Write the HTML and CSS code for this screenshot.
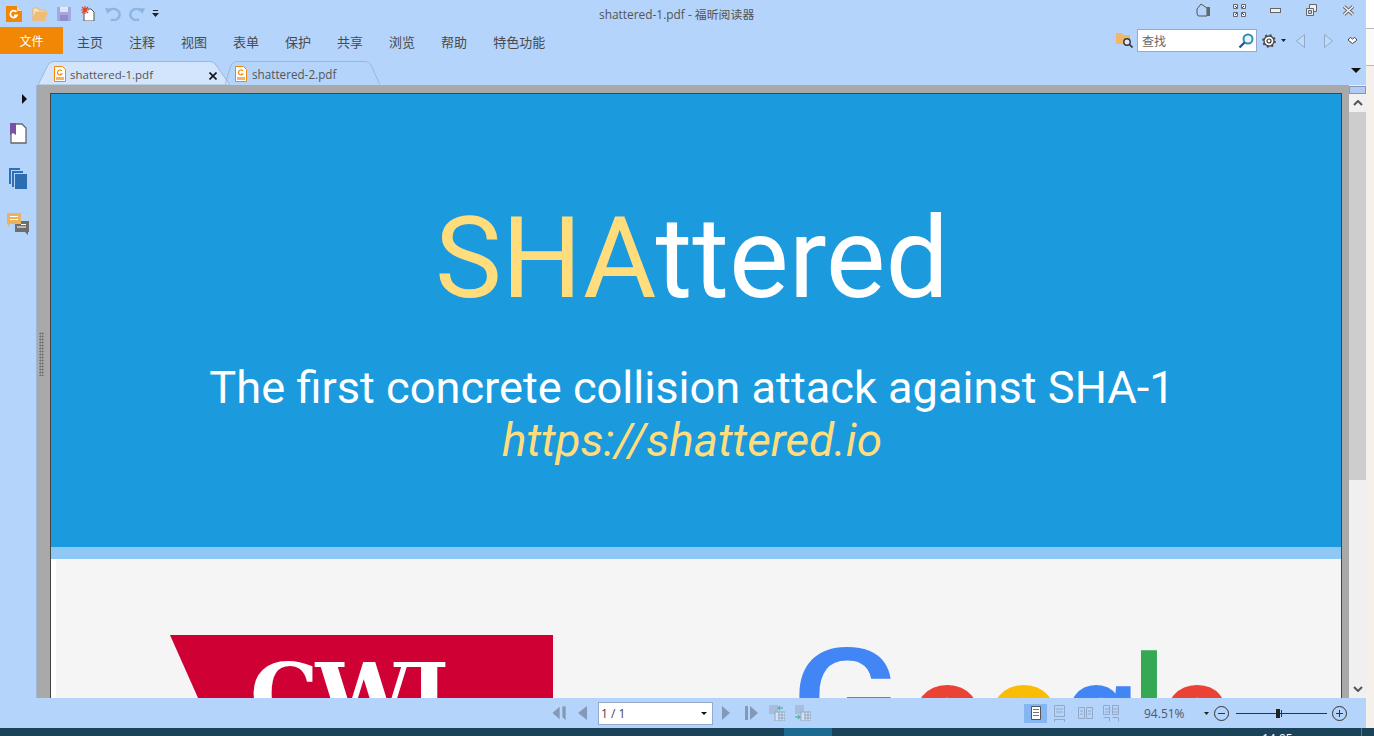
FILE: index.html
```html
<!DOCTYPE html>
<html>
  <head>
    <title>shattered-1.pdf - 福昕阅读器</title>
    <meta name="viewport" content="width=device-width, initial-scale=1.0">
    <link rel="stylesheet" href="styles.css">
  </head>
  <body>
    <div class="screen">
      <div class="desk">
        <div class="app">

          <!-- title bar -->
          <div class="titlebar">
            <div class="quick">
              <svg class="q-logo" width="16" height="16" viewBox="0 0 16 16"><path d="M0 0h11l5 5v11H0z" fill="#f28705"/><path d="M11 0l5 5h-5z" fill="#fbd9ae"/><path d="M10.500 5.800A3.500 3.500 0 1 0 11 9.500H8" fill="none" stroke="#fff" stroke-width="1.800"/></svg>
              <svg class="q-open" width="16" height="14" viewBox="0 0 16 14"><path d="M1 1h5l1 2h6v2H4L1 12z" fill="#fbe3b8" stroke="#eab56a" stroke-width="1"/><path d="M4 5h12l-3 9H0z" fill="#efbd76"/></svg>
              <svg class="q-save" width="14" height="14" viewBox="0 0 14 14"><path d="M0 0h14v14H0z" fill="#a5a8dc"/><path d="M3 0h8v5H3z" fill="#e2e4f6"/><path d="M3 8h8v6H3z" fill="#8d90cc"/></svg>
              <svg class="q-new" width="15" height="15" viewBox="0 0 15 15"><path d="M4 3h7l3 3v9H4z" fill="#fff" stroke="#555"/><path d="M5 0v8M1 4h8M2 1l6 6M8 1L2 7" stroke="#e2452c" stroke-width="1.200"/></svg>
              <svg class="q-undo" width="16" height="15" viewBox="0 0 16 15"><path d="M4 5a6 5.500 0 1 1 2 8.500" fill="none" stroke="#8db4e2" stroke-width="2.500"/><path d="M0 2l7 .5L2.500 8z" fill="#8db4e2"/></svg>
              <svg class="q-redo" width="16" height="15" viewBox="0 0 16 15"><path d="M12 5a6 5.500 0 1 0-2 8.500" fill="none" stroke="#8db4e2" stroke-width="2.500"/><path d="M16 2l-7 .5L13.500 8z" fill="#8db4e2"/></svg>
              <svg class="q-more" width="7" height="7" viewBox="0 0 7 7"><path d="M1 0h5v1H1zM0 3h7L3.500 7z" fill="#222"/></svg>
            </div>
            <div class="win-title">shattered-1.pdf - 福昕阅读器</div>
            <div class="win-btns">
              <svg class="w-skin" width="15" height="14" viewBox="0 0 15 14"><path d="M1 6l4-5 6 4v8H3Q1 13 1 10z" fill="none" stroke="#555"/><path d="M11 4h3v9h-3z" fill="#666"/></svg>
              <svg class="w-full" width="13" height="13" viewBox="0 0 13 13"><path d="M.5.500h4v4h-4zM8.500.500h4v4h-4zM.5 8.500h4v4h-4zM8.500 8.500h4v4h-4z" fill="#eef3fb" stroke="#666"/><path d="M2 2l2 2M11 2L9 4M2 11l2-2M11 11L9 9" stroke="#444"/></svg>
              <svg class="w-min" width="11" height="5" viewBox="0 0 11 5"><rect x=".5" y=".5" width="10" height="4" fill="#e8f0fb" stroke="#666"/></svg>
              <svg class="w-max" width="11" height="12" viewBox="0 0 11 12"><path d="M3.500.5h7v7h-7z" fill="#e8f0fb" stroke="#666"/><path d="M.5 4.500h7v7h-7z" fill="#e8f0fb" stroke="#666"/><path d="M2.500 6.500h3v3h-3z" fill="#b4d4fb" stroke="#666"/></svg>
              <svg class="w-close" width="13" height="11" viewBox="0 0 13 11"><path d="M2 1.500l9 8M11 1.500l-9 8" stroke="#666" stroke-width="3.600"/><path d="M2 1.500l9 8M11 1.500l-9 8" stroke="#eef3fb" stroke-width="1.600"/></svg>
            </div>
          </div>

          <!-- ribbon tabs -->
          <div class="ribbon">
            <div class="file-btn">文件</div>
            <nav class="menu">
              <span>主页</span><span>注释</span><span>视图</span><span>表单</span><span>保护</span><span>共享</span><span>浏览</span><span>帮助</span><span>特色功能</span>
            </nav>
            <div class="search-tools">
              <svg class="s-folder" width="17" height="15" viewBox="0 0 17 15"><path d="M0 0h6l1 2h7v9H0z" fill="#efb766"/><circle cx="11" cy="9" r="3.200" fill="#dce9fb" stroke="#333" stroke-width="1.400"/><path d="M13.500 11.500L16.500 14.500" stroke="#333" stroke-width="1.600"/></svg>
              <div class="search-box">
                <span>查找</span>
                <svg width="16" height="16" viewBox="0 0 16 16"><circle cx="10" cy="6" r="4.500" fill="#e9f4fb" stroke="#2f8fc0" stroke-width="2"/><path d="M6.500 9.500L1.500 14.500" stroke="#1f5f96" stroke-width="2.400"/></svg>
              </div>
              <svg class="s-gear" width="14" height="14" viewBox="0 0 14 14"><circle cx="7" cy="7" r="5" fill="#fff" stroke="#444" stroke-width="1.300"/><circle cx="7" cy="7" r="6" fill="none" stroke="#444" stroke-width="1.600" stroke-dasharray="2 2.710"/><circle cx="7" cy="7" r="2" fill="#fff" stroke="#333" stroke-width="1.200"/></svg>
              <svg class="s-drop" width="5" height="3" viewBox="0 0 5 3"><path d="M0 0h5L2.500 3z" fill="#222"/></svg>
              <svg class="s-prev" width="9" height="14" viewBox="0 0 9 14"><path d="M8.500.5v13L.5 7z" fill="#c3daf7" stroke="#8fa9cc"/></svg>
              <svg class="s-next" width="9" height="14" viewBox="0 0 9 14"><path d="M.5.5v13L8.500 7z" fill="#c3daf7" stroke="#8fa9cc"/></svg>
              <svg class="s-fold" width="9" height="7" viewBox="0 0 9 7"><path d="M.5 2L2.500.5 4.500 2 6.500.5 8.500 2v1.500L4.500 6.500.5 3.500z" fill="#fff" stroke="#444"/></svg>
            </div>
          </div>

          <!-- document tabs -->
          <div class="doc-tabs">
            <div class="doc-tab active">
              <svg class="tab-bg" viewBox="0 0 192 24" preserveAspectRatio="none"><path d="M0 24L10 4Q12 .5 16 .5H172Q176 .5 178 4L192 24z" fill="#d3e5fd" stroke="#9db7d9"/></svg>
              <svg class="pdf-ico" width="12" height="16" viewBox="0 0 12 16"><path d="M.5.5h8l3 3v12H.5z" fill="#fff" stroke="#f28705"/><path d="M8 5A2.500 2.500 0 1 0 8 8H6" fill="none" stroke="#f28705" stroke-width="1.200"/><path d="M2 11h8v3H2z" fill="#f5b26b"/></svg>
              <span class="tab-name">shattered-1.pdf</span>
              <svg class="tab-close" width="8" height="8" viewBox="0 0 8 8"><path d="M.5.5l7 7M7.500.5l-7 7" stroke="#111" stroke-width="1.600"/></svg>
            </div>
            <div class="doc-tab second">
              <svg class="tab-bg" viewBox="0 0 155 24" preserveAspectRatio="none"><path d="M0 24L6 4Q8 .5 12 .5H140Q144 .5 146 4L155 24" fill="none" stroke="#9db7d9"/></svg>
              <svg class="pdf-ico" width="12" height="16" viewBox="0 0 12 16"><path d="M.5.5h8l3 3v12H.5z" fill="#fff" stroke="#f28705"/><path d="M8 5A2.500 2.500 0 1 0 8 8H6" fill="none" stroke="#f28705" stroke-width="1.200"/><path d="M2 11h8v3H2z" fill="#f5b26b"/></svg>
              <span class="tab-name">shattered-2.pdf</span>
            </div>
            <svg class="tabs-more" width="10" height="5" viewBox="0 0 10 5"><path d="M0 0h10L5 5z" fill="#111"/></svg>
          </div>

          <!-- sidebar, page, scrollbar -->
          <div class="work">
            <aside class="sidebar">
              <svg class="side-arrow" width="5" height="10" viewBox="0 0 5 10"><path d="M0 0l5 5-5 5z" fill="#111"/></svg>
              <svg class="side-ico first" width="17" height="21" viewBox="0 0 17 21"><path d="M1 1h11l4 4v15H1z" fill="#fff" stroke="#666" stroke-width="1.300"/><path d="M0 0h6v12l-3-2-3 2z" fill="#7b52a3"/></svg>
              <svg class="side-ico" width="18" height="21" viewBox="0 0 18 21"><path d="M0 0h11v2H2v14H0zM3 3h11v2H5v14H3z" fill="#2f6fb5"/><path d="M6 6h12v15H6z" fill="#2c6cb0"/></svg>
              <svg class="side-ico" width="22" height="22" viewBox="0 0 22 22"><path d="M8 8h14v11h-1v3l-3-3H8z" fill="#6e6e6e"/><path d="M0 0h14v11H3l-2 3v-3H0z" fill="#efb25c"/><path d="M3 3.500h8M3 6.500h8M10 14h9M14 11.500h5" stroke="#fff"/></svg>
            </aside>
            <div class="grip"></div>
            <main class="viewer">
              <article class="page">
                <section class="hero">
                  <h1><span class="sha">SHA</span>ttered</h1>
                  <p class="sub">The first concrete collision attack against SHA-1</p>
                  <p class="url">https://shattered.io</p>
                </section>
                <div class="band"></div>
                <section class="logos">
                  <div class="cwi">CWI</div>
                  <div class="google"><span class="g1">G</span><span class="g2">o</span><span class="g3">o</span><span class="g4">g</span><span class="g5">l</span><span class="g6">e</span></div>
                </section>
              </article>
            </main>
            <div class="scrollbar">
              <div class="sb-cap"></div>
              <div class="sb-btn"><svg width="10" height="6" viewBox="0 0 10 6"><path d="M1 5l4-4 4 4" fill="none" stroke="#555" stroke-width="2"/></svg></div>
              <div class="sb-thumb"></div>
              <div class="sb-track"></div>
              <div class="sb-btn"><svg width="10" height="6" viewBox="0 0 10 6"><path d="M1 1l4 4 4-4" fill="none" stroke="#555" stroke-width="2"/></svg></div>
            </div>
          </div>

          <!-- status bar -->
          <footer class="status">
            <svg class="n-first" width="14" height="14" viewBox="0 0 14 14"><path d="M8 0v14L0 7zM10 0h4v14h-1l-3-3z" fill="#8499b8" stroke="#c9dcf5" stroke-width=".6"/></svg>
            <svg class="n-prev" width="9" height="14" viewBox="0 0 9 14"><path d="M9 0v14L0 7z" fill="#8499b8"/></svg>
            <div class="page-select"><span>1 / 1</span><svg width="6" height="3" viewBox="0 0 6 3"><path d="M0 0h6L3 3z" fill="#111"/></svg></div>
            <svg class="n-next" width="8" height="14" viewBox="0 0 8 14"><path d="M0 0v14l8-7z" fill="#8499b8"/></svg>
            <svg class="n-last" width="13" height="14" viewBox="0 0 13 14"><path d="M0 0h3v14H0zM5 0v14l8-7z" fill="#8499b8"/></svg>
            <svg class="n-tab" width="16" height="16" viewBox="0 0 16 16"><path d="M0 0h9v9H0z" fill="#a9bcd8"/><path d="M6 7h10v9H6z" fill="#d8e3f2" stroke="#90a5c4"/><path d="M9 10h7M9 13h7M10 7v9M13 7v9" stroke="#90a5c4"/><path d="M14 3H9M11 1L9 3l2 2" fill="none" stroke="#5fb6a8" stroke-width="1.300"/></svg>
            <svg class="n-tab2" width="16" height="16" viewBox="0 0 16 16"><path d="M0 0h9v9H0z" fill="#a9bcd8"/><path d="M6 7h10v9H6z" fill="#d8e3f2" stroke="#90a5c4"/><path d="M9 10h7M9 13h7M10 7v9M13 7v9" stroke="#90a5c4"/><path d="M0 12h5M3 10l2 2-2 2" fill="none" stroke="#5fb6a8" stroke-width="1.300"/></svg>

            <div class="view-modes">
              <div class="mode on"><svg width="10" height="14" viewBox="0 0 10 14"><path d="M.5.5h9v13h-9z" fill="#fff" stroke="#555"/><path d="M2 3.500h6M2 6.500h6M2 9.500h6" stroke="#777"/></svg></div>
              <svg class="mode-ico" width="11" height="17" viewBox="0 0 11 17"><path d="M.5.500h10v11H.5zM.5 14v3M10.500 14v3M.5 14.500h10M2 4h7M2 7h7" fill="none" stroke="#93a8c6"/></svg>
              <svg class="mode-ico" width="15" height="12" viewBox="0 0 15 12"><path d="M.5.500h6v11h-6zM8.500.500h6v11h-6zM2 4h3M2 7h3M10 4h3M10 7h3" fill="none" stroke="#93a8c6"/></svg>
              <svg class="mode-ico" width="16" height="17" viewBox="0 0 16 17"><path d="M.5.500h6v9h-6zM9.500.500h6v9h-6zM.5 12.500h6v4M9.500 12.500h6v4M2 4h4M10 4h5M2 7h4M10 7h5" fill="none" stroke="#93a8c6"/></svg>
            </div>
            <span class="zoom-val">94.51%</span>
            <svg class="zoom-drop" width="5" height="3" viewBox="0 0 5 3"><path d="M0 0h5L2.500 3z" fill="#222"/></svg>
            <svg class="zoom-btn" width="15" height="15" viewBox="0 0 15 15"><circle cx="7.500" cy="7.500" r="7" fill="none" stroke="#333"/><path d="M4 7.500h7" stroke="#333"/></svg>
            <div class="slider"><div class="knob"></div><div class="tick"></div></div>
            <svg class="zoom-btn" width="15" height="15" viewBox="0 0 15 15"><circle cx="7.500" cy="7.500" r="7" fill="none" stroke="#333"/><path d="M4 7.500h7M7.500 4v7" stroke="#333"/></svg>
          </footer>
        </div>

        <div class="strip">
          <div class="strip-a"></div>
          <div class="strip-b"></div>
          <div class="strip-c"></div>
        </div>
      </div>

      <div class="taskbar">
        <div class="task-active"></div>
        <div class="clock">14:05</div>
        <div class="task-line"></div>
      </div>
    </div>
  </body>
</html>
```

FILE: styles.css
```css
* {
  box-sizing: border-box;
}
html, body {
  margin: 0;
  height: 736px;
  overflow: hidden;
}
body {
  font-family: "Open Sans", "Noto Sans CJK SC", sans-serif;
  color: #444;
}
svg {
  display: block;
  flex: none;
}
.screen {
  height: 736px;
  display: flex;
  flex-direction: column;
}
.desk {
  height: 728px;
  display: flex;
}
.app {
  width: 1366px;
  display: flex;
  flex-direction: column;
  background-color: #b4d4fb;
}

/* title bar */
.titlebar {
  height: 27px;
  flex: none;
  display: grid;
  grid-template-columns: 599px auto 1fr;
  align-items: center;
}
.quick {
  display: flex;
  align-items: center;
  padding-left: 6px;
}
.q-open { margin-left: 10px; }
.q-save { margin-left: 9px; }
.q-new { margin-left: 9px; }
.q-undo { margin-left: 10px; }
.q-redo { margin-left: 8px; }
.q-more { margin-left: 7px; }
.win-title {
  font-size: 11.900px;
  color: #555;
  margin-top: -1px;
}
.win-btns {
  display: flex;
  align-items: center;
  justify-content: flex-end;
  padding-right: 11px;
  margin-top: -7px;
}
.w-full { margin-left: 22px; }
.w-min { margin-left: 24px; }
.w-max { margin-left: 25px; }
.w-close { margin-left: 25px; }

/* ribbon */
.ribbon {
  height: 27px;
  flex: none;
  display: flex;
  align-items: center;
}
.file-btn {
  width: 63px;
  height: 27px;
  background-color: #f28705;
  color: #fff;
  font-size: 12px;
  display: flex;
  align-items: center;
  justify-content: center;
}
.menu {
  display: flex;
  gap: 26px;
  margin-left: 14px;
  font-size: 13px;
  color: #4a4a4a;
  padding-top: 2px;
}
.search-tools {
  display: flex;
  align-items: center;
  margin-left: auto;
  padding-right: 9px;
}
.search-box {
  width: 120px;
  height: 23px;
  margin-left: 4px;
  background-color: #fff;
  border: 1px solid #94a9cb;
  display: flex;
  align-items: center;
  justify-content: space-between;
  padding: 0 2px 0 4px;
  font-size: 12px;
  color: #666;
}
.s-gear { margin-left: 5px; }
.s-drop { margin-left: 5px; }
.s-prev { margin-left: 10px; }
.s-next { margin-left: 19px; }
.s-fold { margin-left: 15px; }

/* document tabs */
.doc-tabs {
  height: 31px;
  flex: none;
  display: flex;
  align-items: flex-end;
  padding-left: 38px;
}
.doc-tab {
  position: relative;
  height: 24px;
  display: flex;
  align-items: center;
  font-size: 11.500px;
  color: #555;
  padding-top: 2px;
}
.doc-tab.active {
  width: 192px;
  padding-left: 16px;
}
.doc-tab.second {
  width: 155px;
  margin-left: -5px;
  padding-left: 10px;
}
.doc-tab.second .tab-name {
  font-size: 11.700px;
  margin-left: 5px;
}
.tab-bg {
  position: absolute;
  left: 0;
  top: 0;
  width: 100%;
  height: 100%;
}
.pdf-ico, .tab-name, .tab-close {
  position: relative;
}
.tab-name {
  margin-left: 4px;
}
.tab-close {
  margin-left: 56px;
  margin-top: 4px;
}
.tabs-more {
  margin-left: auto;
  margin-right: 5px;
  margin-bottom: 12px;
}

/* work area */
.work {
  flex: 1;
  min-height: 0;
  display: flex;
}
.sidebar {
  width: 37px;
  flex: none;
  border-right: 1px solid #9db7d9;
  display: flex;
  flex-direction: column;
  align-items: center;
  gap: 24px;
  padding-top: 9px;
}
.side-arrow {
  margin-left: 12px;
}
.side-ico.first {
  margin-top: -5px;
}
.grip {
  width: 0;
  flex: none;
  align-self: flex-start;
}
.grip::before {
  content: "";
  display: block;
  width: 5px;
  height: 44px;
  margin-top: 247px;
  margin-left: 2px;
  background-image: radial-gradient(#666 45%, transparent 50%);
  background-size: 2.500px 3px;
  position: relative;
}
.viewer {
  flex: 1;
  min-width: 0;
  background-color: #a9a9a9;
  padding: 8px 7px 0 13px;
  overflow: hidden;
}
.page {
  height: 100%;
  border-left: 1px solid #444;
  border-top: 1px solid #444;
  border-right: 1px solid #444;
  background-color: #f5f5f5;
  overflow: hidden;
}
.hero {
  height: 453px;
  background-color: #1b9ade;
  color: #fff;
  font-family: Roboto, sans-serif;
  text-align: center;
  padding: 105px 8px 0 0;
}
.hero h1 {
  margin: 0;
  font-size: 112.500px;
  font-weight: 400;
  line-height: 120px;
}
.sha, .url {
  color: #ffdd7d;
}
.sub {
  margin: 44px 0 0;
  font-size: 45.200px;
  font-weight: 400;
  line-height: 50px;
}
.url {
  margin: 0;
  font-size: 45.900px;
  font-weight: 400;
  font-style: italic;
  line-height: 54px;
}
.band {
  height: 12px;
  background-color: #90c8f5;
}
.logos {
  height: 200px;
  border-left: 5px solid #fff;
  display: flex;
  padding: 76px 0 0 114px;
}
.cwi {
  width: 383px;
  height: 200px;
  flex: none;
  background-color: #cf0033;
  clip-path: polygon(0 0, 100% 0, 100% 100%, 89px 100%);
  color: #fff;
  font-family: "DejaVu Serif", serif;
  font-weight: 700;
  font-size: 86px;
  line-height: 100px;
  letter-spacing: -3px;
  padding: 10px 0 0 80px;
}
.google {
  display: flex;
  align-items: flex-start;
  margin-left: 238px;
  margin-top: -5px;
  font-family: Roboto, sans-serif;
  font-size: 135px;
  line-height: 135px;
  font-weight: 500;
}
.google span {
  display: block;
  flex: none;
  margin-top: 15px;
}
.google .g1 {
  width: 118px;
  margin-top: 0;
  font-size: 140px;
  line-height: 140px;
  color: #4285f4;
  transform: scaleX(1.15);
  transform-origin: left;
}
.g2 { color: #ea4335; }
.g3 { color: #fbbc05; }
.g4 { color: #4285f4; }
.google .g5 { color: #34a853; margin-top: 9px; margin-left: -7px; }
.g6 { color: #ea4335; margin-left: -7px; }
.scrollbar {
  width: 17px;
  flex: none;
  display: flex;
  flex-direction: column;
  padding-top: 1px;
  background-color: #f0f0f0;
}
.sb-cap {
  height: 8px;
  background-color: #b0ccf2;
  border: 1px solid #8b93bd;
}
.sb-btn {
  height: 18px;
  display: flex;
  align-items: center;
  justify-content: center;
  flex: none;
}
.sb-thumb {
  height: 368px;
  background-color: #cdcdcd;
}
.sb-track {
  flex: 1;
}

/* status bar */
.status {
  height: 30px;
  flex: none;
  display: flex;
  align-items: center;
  padding-left: 552px;
}
.n-prev { margin-left: 12px; }
.page-select {
  width: 115px;
  height: 23px;
  margin-left: 11px;
  background-color: #fff;
  border: 1px solid #94a9cb;
  display: flex;
  align-items: center;
  justify-content: space-between;
  padding: 0 5px 0 2px;
  font-size: 12px;
  color: #445;
}
.n-next { margin-left: 9px; }
.n-last { margin-left: 15px; }
.n-tab { margin-left: 11px; }
.n-tab2 { margin-left: 10px; }
.view-modes {
  display: flex;
  align-items: center;
  margin-left: 213px;
}
.mode {
  width: 23px;
  height: 19px;
  background-color: #85b6f1;
  display: flex;
  align-items: center;
  justify-content: center;
}
.mode-ico {
  margin-left: 7px;
}
.mode-ico + .mode-ico {
  margin-left: 13px;
}
.mode-ico + .mode-ico + .mode-ico {
  margin-left: 10px;
}
.zoom-val {
  margin-left: 25px;
  font-size: 12px;
  color: #556;
}
.zoom-drop { margin-left: 19px; }
.zoom-btn { margin-left: 5px; }
.slider {
  position: relative;
  width: 91px;
  height: 1px;
  margin-left: 7px;
  background-color: #333;
}
.knob {
  position: absolute;
  left: 40px;
  top: -4px;
  width: 4px;
  height: 9px;
  background-color: #222;
}
.tick {
  position: absolute;
  left: 45px;
  top: -3px;
  width: 1px;
  height: 7px;
  background-color: #333;
}

/* what is left of the desktop */
.strip {
  flex: 1;
  display: flex;
  flex-direction: column;
}
.strip-a {
  height: 29px;
  background-color: #fff;
  border-bottom: 1px solid #bbb;
}
.strip-b {
  height: 37px;
  background-color: #fbfaf7;
  border-bottom: 1px solid #bbb;
}
.strip-c {
  flex: 1;
  background-color: #f5f1ea;
}
.taskbar {
  height: 8px;
  position: relative;
  background-color: #1a4258;
  overflow: hidden;
}
.task-active {
  position: absolute;
  left: 784px;
  top: 0;
  width: 48px;
  height: 8px;
  background-color: #1c6a8f;
}
.clock {
  position: absolute;
  left: 1262px;
  top: 3px;
  font-size: 12px;
  line-height: 16px;
  color: #fff;
}
.task-line {
  position: absolute;
  left: 1361px;
  top: 0;
  width: 1px;
  height: 8px;
  background-color: #5a7a8c;
}
```
